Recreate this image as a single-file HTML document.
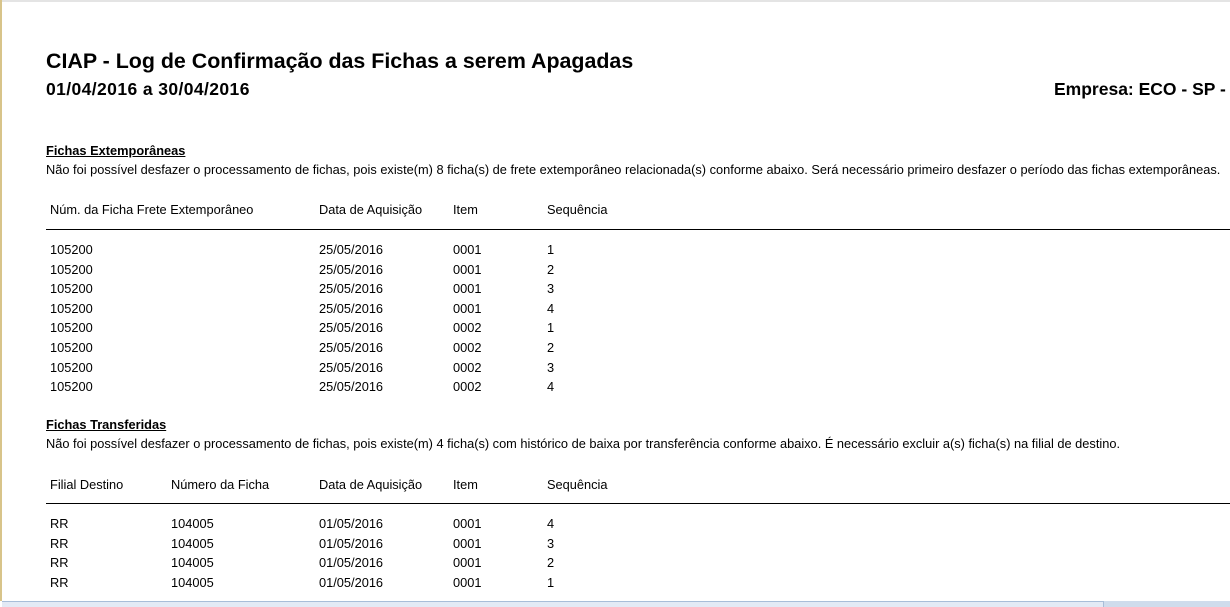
<!DOCTYPE html>
<html><head><meta charset="utf-8"><style>
html,body{margin:0;padding:0;}
body{width:1230px;height:607px;overflow:hidden;background:#fff;position:relative;font-family:"Liberation Sans",sans-serif;color:#000;}
.bl{position:absolute;left:0;top:0;width:2px;height:601px;background:#d8c48a;}
.bt{position:absolute;left:0;top:0;width:1230px;height:2px;background:#e4e4e4;}
.t{position:absolute;white-space:nowrap;font-size:12.8px;}
.h1{position:absolute;left:46px;top:49px;font-size:21.4px;font-weight:bold;white-space:nowrap;}
.h2{position:absolute;top:79px;font-size:17.5px;font-weight:bold;white-space:nowrap;}
.sec{font-weight:bold;text-decoration:underline;}
.line{position:absolute;left:46px;width:1184px;height:1px;background:#000;}
.sb{position:absolute;left:2px;top:601px;width:1102px;height:6px;background:#e3eaf5;border-top:1px solid #a8bdd8;border-right:1px solid #a8bdd8;box-sizing:border-box;}
.sb2{position:absolute;left:1104px;top:601px;width:126px;height:6px;background:#cfdcec;}
</style></head><body>
<div class="bt"></div><div class="bl"></div>
<div class="h1">CIAP - Log de Confirmação das Fichas a serem Apagadas</div>
<div class="h2" style="left:46px;letter-spacing:0.4px">01/04/2016 a 30/04/2016</div>
<div class="h2" style="left:1054px">Empresa: ECO - SP - FII</div>

<div class="t sec" style="left:46px;top:143px">Fichas Extemporâneas</div>
<div class="t" style="left:46px;top:162px">Não foi possível desfazer o processamento de fichas, pois existe(m) 8 ficha(s) de frete extemporâneo relacionada(s) conforme abaixo. Será necessário primeiro desfazer o período das fichas extemporâneas.</div>
<div class="t" style="left:50px;top:202px">Núm. da Ficha Frete Extemporâneo</div>
<div class="t" style="left:319px;top:202px">Data de Aquisição</div>
<div class="t" style="left:453px;top:202px">Item</div>
<div class="t" style="left:547px;top:202px">Sequência</div>
<div class="line" style="top:229px"></div>

<div class="t" style="left:50px;top:240px;line-height:19.6px">105200<br>105200<br>105200<br>105200<br>105200<br>105200<br>105200<br>105200</div>
<div class="t" style="left:319px;top:240px;line-height:19.6px">25/05/2016<br>25/05/2016<br>25/05/2016<br>25/05/2016<br>25/05/2016<br>25/05/2016<br>25/05/2016<br>25/05/2016</div>
<div class="t" style="left:453px;top:240px;line-height:19.6px">0001<br>0001<br>0001<br>0001<br>0002<br>0002<br>0002<br>0002</div>
<div class="t" style="left:547px;top:240px;line-height:19.6px">1<br>2<br>3<br>4<br>1<br>2<br>3<br>4</div>

<div class="t sec" style="left:46px;top:417px">Fichas Transferidas</div>
<div class="t" style="left:46px;top:436px">Não foi possível desfazer o processamento de fichas, pois existe(m) 4 ficha(s) com histórico de baixa por transferência conforme abaixo. É necessário excluir a(s) ficha(s) na filial de destino.</div>
<div class="t" style="left:50px;top:477px">Filial Destino</div>
<div class="t" style="left:171px;top:477px">Número da Ficha</div>
<div class="t" style="left:319px;top:477px">Data de Aquisição</div>
<div class="t" style="left:453px;top:477px">Item</div>
<div class="t" style="left:547px;top:477px">Sequência</div>
<div class="line" style="top:503px"></div>

<div class="t" style="left:50px;top:514px;line-height:19.6px">RR<br>RR<br>RR<br>RR</div>
<div class="t" style="left:171px;top:514px;line-height:19.6px">104005<br>104005<br>104005<br>104005</div>
<div class="t" style="left:319px;top:514px;line-height:19.6px">01/05/2016<br>01/05/2016<br>01/05/2016<br>01/05/2016</div>
<div class="t" style="left:453px;top:514px;line-height:19.6px">0001<br>0001<br>0001<br>0001</div>
<div class="t" style="left:547px;top:514px;line-height:19.6px">4<br>3<br>2<br>1</div>

<div class="sb"></div><div class="sb2"></div>
</body></html>
